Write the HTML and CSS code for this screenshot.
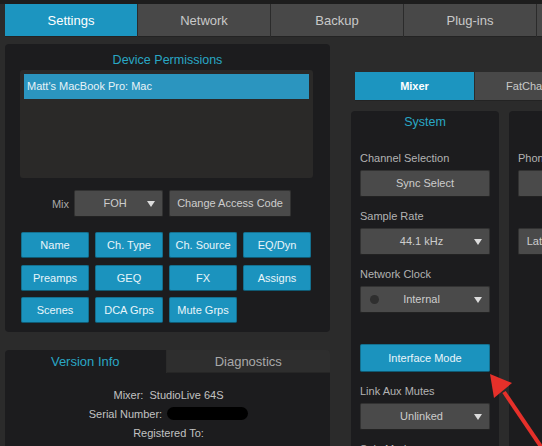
FILE: index.html
```html
<!DOCTYPE html>
<html lang="en">
<head>
    <meta charset="UTF-8">
    <meta name="viewport" content="width=device-width, initial-scale=1.0">
    <title>Settings</title>
    <link rel="stylesheet" href="styles.css">
</head>
<body>

    <div class="topbar">
        <div class="tab active">Settings</div>
        <div class="tab">Network</div>
        <div class="tab">Backup</div>
        <div class="tab">Plug-ins</div>
        <div class="tab"></div>
    </div>

    <div class="main">
        <div class="left-col">
            <div class="panel perms">
                <div class="title">Device Permissions</div>
                <div class="device-list">
                    <div class="device selected">Matt's MacBook Pro: Mac</div>
                </div>
                <div class="mix-row">
                    <span class="mix-label">Mix</span>
                    <div class="btn dropdown foh">
                        <span class="dd-text">FOH</span>
                        <span class="dd-arrow"></span>
                    </div>
                    <div class="btn access">Change Access Code</div>
                </div>
                <div class="perm-grid">
                    <div class="btn blue">Name</div>
                    <div class="btn blue">Ch. Type</div>
                    <div class="btn blue">Ch. Source</div>
                    <div class="btn blue">EQ/Dyn</div>
                    <div class="btn blue">Preamps</div>
                    <div class="btn blue">GEQ</div>
                    <div class="btn blue">FX</div>
                    <div class="btn blue">Assigns</div>
                    <div class="btn blue">Scenes</div>
                    <div class="btn blue">DCA Grps</div>
                    <div class="btn blue">Mute Grps</div>
                </div>
            </div>

            <div class="info">
                <div class="info-tabs">
                    <div class="info-tab active">Version Info</div>
                    <div class="info-tab">Diagnostics</div>
                </div>
                <div class="info-body">
                    <div class="info-line">Mixer:&nbsp; StudioLive 64S</div>
                    <div class="info-line">Serial Number: <span class="redacted"></span></div>
                    <div class="info-line">Registered To:</div>
                </div>
            </div>
        </div>

        <div class="right-col">
            <div class="subtabs">
                <div class="subtab active">Mixer</div>
                <div class="subtab">FatChannel</div>
            </div>
            <div class="sections">
                <div class="section">
                    <div class="title">System</div>
                    <div class="field first">
                        <div class="label">Channel Selection</div>
                        <div class="btn">Sync Select</div>
                    </div>
                    <div class="field">
                        <div class="label">Sample Rate</div>
                        <div class="btn dropdown">
                            <span class="dd-text">44.1 kHz</span>
                            <span class="dd-arrow"></span>
                        </div>
                    </div>
                    <div class="field">
                        <div class="label">Network Clock</div>
                        <div class="btn dropdown">
                            <span class="dot"></span>
                            <span class="dd-text">Internal</span>
                            <span class="dd-arrow"></span>
                        </div>
                    </div>
                    <div class="btn blue mode">Interface Mode</div>
                    <div class="field">
                        <div class="label">Link Aux Mutes</div>
                        <div class="btn dropdown">
                            <span class="dd-text">Unlinked</span>
                            <span class="dd-arrow"></span>
                        </div>
                    </div>
                    <div class="field">
                        <div class="label">Solo Mode</div>
                    </div>
                </div>
                <div class="section">
                    <div class="title">Monitoring</div>
                    <div class="field first">
                        <div class="label">Phones Source</div>
                        <div class="btn">Solo</div>
                    </div>
                    <div class="field">
                        <div class="label">&nbsp;</div>
                        <div class="btn">Latency Compensation</div>
                    </div>
                </div>
            </div>
        </div>
    </div>

    <svg class="arrow" width="70" height="90" viewBox="0 0 70 90">
        <line x1="14" y1="18" x2="56" y2="80" stroke="#e5302a" stroke-width="4"/>
        <polygon points="0,0 4,24 22,9" fill="#e5302a"/>
    </svg>

</body>
</html>
```

FILE: styles.css
```css
* {
    margin: 0;
    padding: 0;
    box-sizing: border-box;
}
html, body {
    width: 100%;
    height: 100%;
    overflow: hidden;
}
body {
    font-family: "Liberation Sans", Arial, sans-serif;
    background-color: #2b2b2b;
    color: #c4c4c4;
    position: relative;
}
.topbar {
    display: flex;
    gap: 1px;
    padding-left: 5px;
    border-top: 4px solid #1d1d1d;
    height: 37px;
}
.tab {
    width: 132px;
    flex-shrink: 0;
    height: 33px;
    line-height: 33px;
    background: #484848;
    border-bottom: 1px solid #232323;
    color: #c9c9c9;
    font-size: 13px;
    text-align: center;
}
.tab.active {
    background: #1c95c0;
    color: #ffffff;
}
.main {
    display: flex;
    margin-top: 7px;
    padding-left: 5px;
}
.left-col {
    width: 325px;
    flex-shrink: 0;
}
.panel {
    background: #1c1c1e;
    border-radius: 4px;
}
.perms {
    height: 288px;
    padding-top: 8px;
}
.title {
    font-size: 12.5px;
    line-height: 16px;
    color: #29a7c5;
    text-align: center;
}
.device-list {
    margin: 2px 17px 0 15px;
    height: 108px;
    padding: 4px;
    background: #2a2928;
    border-radius: 3px;
}
.device {
    height: 25px;
    line-height: 25px;
    padding-left: 3px;
    font-size: 11px;
    color: #e8f3f7;
}
.device.selected {
    background: #2b95bf;
}
.mix-row {
    display: flex;
    justify-content: center;
    align-items: center;
    gap: 6px;
    margin-top: 12px;
    padding-left: 8px;
}
.mix-label {
    font-size: 11px;
    color: #a8a8a8;
    margin-right: -1px;
}
.btn {
    height: 27px;
    line-height: 25px;
    background: #4a4a4a;
    border: 1px solid #323232;
    border-bottom-color: #222;
    border-radius: 2px;
    color: #cdcdcd;
    font-size: 11px;
    text-align: center;
    white-space: nowrap;
    overflow: hidden;
}
.btn.blue {
    background: #1b93be;
    border-color: #14708f;
    border-bottom-color: #0f5a73;
    color: #e9f5fa;
}
.foh {
    width: 89px;
}
.access {
    width: 122px;
}
.dropdown {
    display: flex;
    align-items: center;
    padding: 0 7px 0 8px;
}
.dd-text {
    flex: 1;
    text-align: center;
}
.dd-arrow {
    width: 0;
    height: 0;
    border-left: 4px solid transparent;
    border-right: 4px solid transparent;
    border-top: 6px solid #dcdcdc;
}
.dot {
    width: 9px;
    height: 9px;
    border-radius: 50%;
    background: #2f2f2f;
    margin-left: 1px;
    margin-right: -10px;
}
.perm-grid {
    display: grid;
    grid-template-columns: repeat(4, 68px);
    grid-auto-rows: 26px;
    column-gap: 6px;
    row-gap: 6.5px;
    margin: 15px 0 0 16px;
}
.perm-grid .btn {
    height: 26px;
    line-height: 24px;
}
.info {
    margin-top: 18px;
}
.info-tabs {
    display: flex;
    height: 23px;
}
.info-tab {
    width: 161px;
    line-height: 23px;
    font-size: 13px;
    text-align: center;
    color: #a9a9a9;
    background: #2e2e2e;
    border-radius: 0 4px 0 0;
}
.info-tab + .info-tab {
    width: 164px;
    margin-left: 1px;
    border-bottom: 1px solid #262626;
}
.info-tab.active {
    background: #1c1c1e;
    color: #29a7c5;
    border-radius: 4px 0 0 0;
}
.info-body {
    background: #1c1c1e;
    height: 80px;
    padding-top: 12.5px;
    padding-left: 2px;
}
.info-line {
    font-size: 11px;
    line-height: 19px;
    text-align: center;
    color: #c2c2c2;
}
.redacted {
    display: inline-block;
    width: 81px;
    height: 13px;
    border-radius: 7px;
    background: #000;
    vertical-align: -2px;
    margin-left: 2px;
}
.right-col {
    flex: 1;
    min-width: 0;
    margin-left: 21px;
    padding-top: 28px;
    overflow: hidden;
}
.subtabs {
    display: flex;
    gap: 1px;
    margin-left: 4px;
}
.subtab {
    width: 119px;
    flex-shrink: 0;
    height: 29px;
    line-height: 29px;
    font-size: 11px;
    text-align: center;
    background: #484848;
    color: #c9c9c9;
    border-bottom: 1px solid #232323;
}
.subtab.active {
    background: #1c95c0;
    color: #ffffff;
    font-weight: bold;
}
.sections {
    display: flex;
    gap: 10px;
    margin-top: 10px;
}
.section {
    width: 148px;
    flex-shrink: 0;
    height: 340px;
    padding: 3px 9px 0 9px;
    background: #1c1c1e;
    border-radius: 4px;
}
.field {
    margin-top: 12px;
}
.field.first {
    margin-top: 21px;
}
.label {
    font-size: 11px;
    line-height: 14px;
    margin-bottom: 5px;
    color: #b3b3b3;
    white-space: nowrap;
}
.mode {
    margin-top: 31px;
    height: 28px;
    line-height: 26px;
}
.arrow {
    position: absolute;
    left: 490px;
    top: 374px;
}
```
